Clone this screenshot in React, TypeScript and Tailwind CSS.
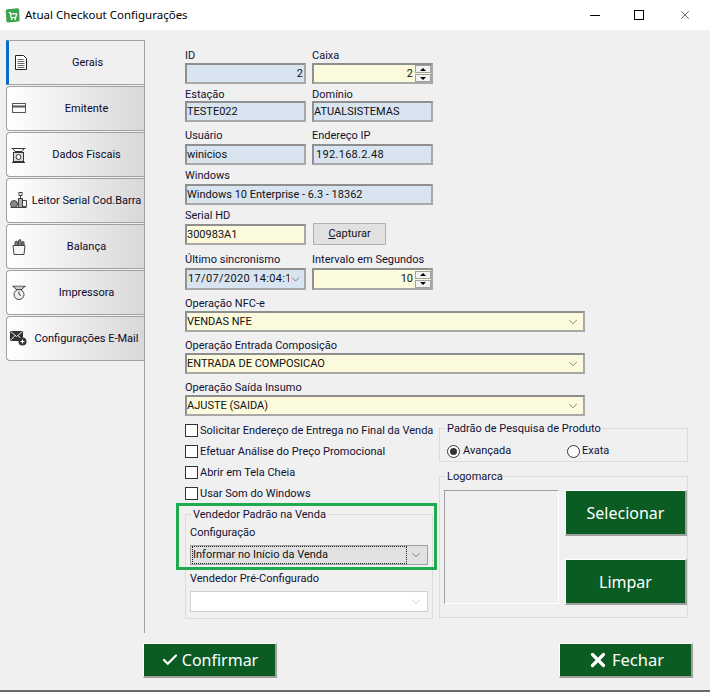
import { Check, ChevronDown, X } from 'lucide-react';
import type { ReactNode } from 'react';

function AppLogo() {
  return (
    <svg width="15" height="15" viewBox="0 0 15 15">
      <path d="M2.5 1.300 L12.500 .3 Q14 .2 14.200 1.800 L14.600 12 Q14.700 13.500 13 13.600 L3.200 14.600 Q1.600 14.700 1.400 13 L.7 3 Q.6 1.500 2.500 1.300Z" fill="#3fa34d" />
      <path d="M3.700 4.500h1.500l1 5h4.500l1-3.700H5.600" fill="none" stroke="#fff" strokeWidth="1.200" />
      <circle cx="6.700" cy="11" r=".9" fill="#fff" />
      <circle cx="10.200" cy="11" r=".9" fill="#fff" />
    </svg>
  );
}

function IconDoc() {
  return (
    <svg width="14" height="17" viewBox="0 0 14 17" fill="none" stroke="#222" strokeWidth="1">
      <path d="M1.500 1.500h8l3 3v11h-11z" fill="#fff" />
      <path d="M3.500 5.500h6M3.500 7.500h7M3.500 9.500h7M3.500 11.500h7M3.500 13.500h7" stroke="#666" />
    </svg>
  );
}

function IconCard() {
  return (
    <svg width="14" height="11" viewBox="0 0 14 11" fill="none" stroke="#555" strokeWidth="1">
      <rect x=".5" y=".5" width="13" height="9" />
      <path d="M.5 3.500h13" strokeWidth="2" />
    </svg>
  );
}

function IconScale() {
  return (
    <svg width="15" height="16" viewBox="0 0 15 16" fill="none" stroke="#333" strokeWidth="1">
      <path d="M.5 1.500h14M2 1.500l2 3h7l2-3" />
      <rect x="2.500" y="5.500" width="10" height="9" fill="#ddd" />
      <circle cx="7.500" cy="10" r="2.500" fill="#fff" />
      <path d="M1 15.500h13" strokeWidth="1.400" />
    </svg>
  );
}

function IconReader() {
  return (
    <svg width="17" height="17" viewBox="0 0 17 17" fill="none" stroke="#444" strokeWidth="1">
      <rect x="9" y=".5" width="3" height="3" />
      <path d="M10.500 3.500v3" />
      <circle cx="4" cy="12" r="3.500" fill="#888" />
      <rect x="8.500" y="6.500" width="4" height="9" fill="#aaa" />
      <path d="M13 8.500h3.500v6H13" />
      <path d="M.5 15.500h16" />
    </svg>
  );
}

function IconBag() {
  return (
    <svg width="14" height="16" viewBox="0 0 14 16" fill="none" stroke="#444" strokeWidth="1">
      <path d="M1 6.500h12l-1 9H2z" fill="#f5f5f5" />
      <path d="M3 6V3l2-1 1 4M6.500 6V1.500l2-1 1 5.500M10 6V2.500l2 .5v3" fill="#888" />
    </svg>
  );
}

function IconRoundScale() {
  return (
    <svg width="14" height="15" viewBox="0 0 14 15" fill="none" stroke="#444" strokeWidth="1">
      <path d="M.5 1.500h13" strokeWidth="1.500" />
      <path d="M2 1.500l2 3h6l2-3" fill="#ccc" />
      <circle cx="7" cy="9.500" r="5" fill="#eee" />
      <path d="M7 6.500v3l2 1" />
    </svg>
  );
}

function IconMail() {
  return (
    <svg width="17" height="15" viewBox="0 0 17 15">
      <rect x="0" y="0" width="13" height="10" fill="#333" />
      <path d="M.5 .5 6.500 5.500 12.500 .5M.5 9.500l4.500-5M12.500 9.500 8 4.500" fill="none" stroke="#eee" strokeWidth="1" />
      <circle cx="12.500" cy="10.500" r="4" fill="#333" />
      <path d="M10.500 10.500h4M12.500 8.500v4" stroke="#fff" strokeWidth="1.200" />
    </svg>
  );
}

const tabs: { label: string; icon: ReactNode }[] = [
  { label: 'Emitente', icon: <IconCard /> },
  { label: 'Dados Fiscais', icon: <IconScale /> },
  { label: 'Leitor Serial Cod.Barra', icon: <IconReader /> },
  { label: 'Balança', icon: <IconBag /> },
  { label: 'Impressora', icon: <IconRoundScale /> },
  { label: 'Configurações E-Mail', icon: <IconMail /> },
];

function Tab({ label, icon }: { label: string; icon: ReactNode }) {
  return (
    <div className="flex h-[45px] items-center rounded-l border border-r-0 border-[#a0a0a0] bg-gradient-to-r from-white to-[#d8d8d8]">
      <span className="flex w-[22px] shrink-0 justify-center pl-[1px]">{icon}</span>
      <span className="flex-1 whitespace-nowrap pt-[2px] text-center text-[#0a0a2a]">{label}</span>
    </div>
  );
}

const inputBorder = 'border-2 border-t-[#8f8f8f] border-l-[#8f8f8f] border-r-[#a8a8a8] border-b-[#a8a8a8]';

function Label({ children, h }: { children: ReactNode; h: string }) {
  return <div className={`${h} whitespace-nowrap pt-[1px] leading-[14px] text-[#111133]`}>{children}</div>;
}

function Box({ children, className }: { children?: ReactNode; className: string }) {
  return <div className={`flex items-center whitespace-nowrap pt-[1px] text-[#111] ${inputBorder} ${className}`}>{children}</div>;
}

function Spinner() {
  return (
    <div className="ml-[2px] -mt-[1px] flex h-[17px] w-[16px] shrink-0 flex-col gap-[1px]">
      <div className="flex h-[8px] items-center justify-center border border-[#a0a0a0] bg-[#f2f2f2]">
        <div className="h-0 w-0 border-x-[3px] border-b-[3px] border-x-transparent border-b-black" />
      </div>
      <div className="flex h-[8px] items-center justify-center border border-[#a0a0a0] bg-[#f2f2f2]">
        <div className="h-0 w-0 border-x-[3px] border-t-[3px] border-x-transparent border-t-black" />
      </div>
    </div>
  );
}

function Select({ value, className }: { value: string; className: string }) {
  return (
    <Box className={`justify-between pr-[3px] ${className}`}>
      <span>{value}</span>
      <ChevronDown size={14} strokeWidth={1} className="text-[#333]" />
    </Box>
  );
}

function CheckRow({ label }: { label: string }) {
  return (
    <div className="flex h-[21px] items-center gap-[2px] text-[#111133]">
      <div className="h-[13px] w-[13px] shrink-0 border border-[#333] bg-white" />
      <span className="whitespace-nowrap pt-[2px]">{label}</span>
    </div>
  );
}

function Group({ title, className, children }: { title: string; className: string; children: ReactNode }) {
  return (
    <div className={`relative border border-[#dcdcdc] ${className}`}>
      <span className="absolute left-[6px] top-[-7px] bg-[#f0f0f0] px-[1px] leading-[14px] text-[#111133]">{title}</span>
      {children}
    </div>
  );
}

function GreenButton({ children, className }: { children: ReactNode; className: string }) {
  return (
    <div className={`flex items-center justify-center gap-[3px] border border-b-2 border-r-2 border-t-white border-l-white border-b-[#a0a0a0] border-r-[#a0a0a0] bg-[#0a5c22] font-["Noto_Sans",sans-serif] text-white ${className}`}>
      {children}
    </div>
  );
}

export default function App() {
  return (
    <div className='flex h-[692px] w-[710px] flex-col overflow-hidden bg-[#f0f0f0] font-["Roboto",sans-serif] text-[11px]'>
      {/* title bar */}
      <div className="flex h-[30px] shrink-0 items-center bg-white pl-[5px]">
        <AppLogo />
        <span className='ml-[5px] font-["Noto_Sans",sans-serif] text-[11.5px] text-black'>Atual Checkout Configurações</span>
        <div className="ml-auto flex items-center gap-[34px] pr-[18px]">
          <div className="h-[1px] w-[10px] bg-black" />
          <div className="h-[10px] w-[10px] border border-black" />
          <X size={14} strokeWidth={1} className="text-black" />
        </div>
      </div>

      <div className="flex h-[603px] shrink-0">
        {/* tabs */}
        <div className="mt-[10px] flex h-[593px] w-[145px] shrink-0 flex-col gap-[1px] border-r border-[#a0a0a0] pl-[6px]">
          <div className="flex h-[45px] items-center border-y border-[#a0a0a0] border-l-[3px] border-l-[#0a6cc4] bg-[#f0f0f0]">
            <span className="flex w-[22px] shrink-0 justify-center pl-[1px]"><IconDoc /></span>
            <span className="flex-1 pt-[2px] text-center text-[#0a0a2a]">Gerais</span>
          </div>
          {tabs.map((t) => (
            <Tab key={t.label} label={t.label} icon={t.icon} />
          ))}
        </div>

        {/* form */}
        <div className="flex w-[505px] flex-col pl-[40px] pt-[18px]">
          <div className="grid w-[248px] grid-cols-2 gap-x-[6px]">
            <div>
              <Label h="h-[15px]">ID</Label>
              <Box className="h-[21px] justify-end bg-[#d8e4f0] pr-[1px]">2</Box>
            </div>
            <div>
              <Label h="h-[15px]">Caixa</Label>
              <Box className="h-[21px] justify-end bg-[#fbfadc]">2<Spinner /></Box>
            </div>
          </div>
          <div className="mt-[3px] grid w-[248px] grid-cols-2 gap-x-[6px]">
            <div>
              <Label h="h-[14px]">Estação</Label>
              <Box className="h-[21px] bg-[#d8e4f0]">TESTE022</Box>
            </div>
            <div>
              <Label h="h-[14px]">Domínio</Label>
              <Box className="h-[21px] bg-[#d8e4f0]">ATUALSISTEMAS</Box>
            </div>
          </div>
          <div className="mt-[6px] grid w-[248px] grid-cols-2 gap-x-[6px]">
            <div>
              <Label h="h-[16px]">Usuário</Label>
              <Box className="h-[21px] bg-[#d8e4f0]">winicios</Box>
            </div>
            <div>
              <Label h="h-[16px]">Endereço IP</Label>
              <Box className="h-[21px] bg-[#d8e4f0] pl-[2px] tracking-[0.3px]">192.168.2.48</Box>
            </div>
          </div>
          <div className="mt-[3px] w-[248px]">
            <Label h="h-[16px]">Windows</Label>
            <Box className="h-[21px] bg-[#d8e4f0]">Windows 10 Enterprise - 6.3 - 18362</Box>
          </div>
          <div className="mt-[3px] w-[248px]">
            <Label h="h-[16px]">Serial HD</Label>
            <div className="flex h-[21px] gap-[7px]">
              <Box className="h-[21px] w-[121px] bg-[#fbfadc]">300983A1</Box>
              <div className="-mt-[1px] flex h-[22px] w-[73px] items-center justify-center border border-[#b0b0b0] bg-[#e1e1e1] text-[#111]">
                <span><u>C</u>apturar</span>
              </div>
            </div>
          </div>
          <div className="mt-[7px] grid w-[248px] grid-cols-2 gap-x-[6px]">
            <div>
              <Label h="h-[16px]">Último sincronismo</Label>
              <Box className="h-[22px] justify-between overflow-hidden bg-[#d8e4f0] pl-[1px] pr-[2px]">
                <span className="w-[101px] overflow-hidden tracking-[0.35px]">17/07/2020 14:04:10</span>
                <ChevronDown size={13} strokeWidth={1} className="shrink-0 text-[#333]" />
              </Box>
            </div>
            <div>
              <Label h="h-[16px]">Intervalo em Segundos</Label>
              <Box className="h-[22px] justify-end bg-[#fbfadc]">10<Spinner /></Box>
            </div>
          </div>
          <div className="mt-[6px] w-[400px]">
            <Label h="h-[15px]">Operação NFC-e</Label>
            <Select value="VENDAS NFE" className="h-[21px] bg-[#fbfadc]" />
          </div>
          <div className="mt-[6px] w-[400px]">
            <Label h="h-[15px]">Operação Entrada Composição</Label>
            <Select value="ENTRADA DE COMPOSICAO" className="h-[21px] bg-[#fbfadc]" />
          </div>
          <div className="mt-[6px] w-[400px]">
            <Label h="h-[15px]">Operação Saída Insumo</Label>
            <Select value="AJUSTE (SAIDA)" className="h-[21px] bg-[#fbfadc]" />
          </div>

          {/* lower columns */}
          <div className="flex gap-[6px]">
            <div className="relative w-[248px] pt-[4px]">
              <CheckRow label="Solicitar Endereço de Entrega no Final da Venda" />
              <CheckRow label="Efetuar Análise do Preço Promocional" />
              <CheckRow label="Abrir em Tela Cheia" />
              <CheckRow label="Usar Som do Windows" />
              <Group title="Vendedor Padrão na Venda" className="mt-[10px] h-[105px] px-[4px] pt-[10px]">
                <Label h="h-[20px]">Configuração</Label>
                <div className="flex h-[20px] items-center justify-between border border-[#a0a0a0] bg-[#e1e1e1] pl-[2px] pr-[4px] text-[#111]">
                  <span className="flex h-[16px] flex-1 items-center pt-[1px] outline outline-1 outline-dotted outline-[#222]">Informar no Início da Venda</span>
                  <ChevronDown size={14} strokeWidth={1} className="ml-[3px] text-[#333]" />
                </div>
                <div className="mt-[6px]">
                  <Label h="h-[20px]">Vendedor Pré-Configurado</Label>
                  <div className="flex h-[21px] items-center justify-end border border-[#d0d0d0] bg-white pr-[4px]">
                    <ChevronDown size={14} strokeWidth={1} className="text-[#aaa]" />
                  </div>
                </div>
              </Group>
              {/* destaque verde por cima do grupo */}
              <div className="absolute left-[-9px] top-[87px] h-[67px] w-[261px] border-[3px] border-[#1faa4f]" />
            </div>

            <div className="w-[251px] pt-[12px]">
              <Group title="Padrão de Pesquisa de Produto" className="h-[34px]">
                <div className="flex h-full items-center pl-[7px] pt-[12px] text-[#111133]">
                  <div className="flex w-[120px] items-center gap-[3px]">
                    <div className="flex h-[13px] w-[13px] items-center justify-center rounded-full border border-[#333] bg-white">
                      <div className="h-[7px] w-[7px] rounded-full bg-[#333]" />
                    </div>
                    <span className="pt-[1px]">Avançada</span>
                  </div>
                  <div className="flex items-center gap-[2px]">
                    <div className="h-[13px] w-[13px] rounded-full border border-[#333] bg-white" />
                    <span className="pt-[1px]">Exata</span>
                  </div>
                </div>
              </Group>
              <Group title="Logomarca" className="mt-[14px] h-[142px]">
                <div className="flex gap-[6px] pl-[4px] pt-[13px]">
                  <div className="h-[114px] w-[115px] border border-b-white border-r-white border-t-[#a0a0a0] border-l-[#a0a0a0]" />
                  <div className="flex w-[122px] flex-col gap-[23px]">
                    <GreenButton className="h-[46px] text-[16px]">Selecionar</GreenButton>
                    <GreenButton className="h-[46px] text-[16px]">Limpar</GreenButton>
                  </div>
                </div>
              </Group>
            </div>
          </div>
        </div>
      </div>

      {/* footer */}
      <div className="flex h-[57px] shrink-0 items-start justify-between pl-[143px] pr-[17px] pt-[10px]">
        <GreenButton className="h-[35px] w-[134px] text-[16px]"><Check size={18} strokeWidth={3} />Confirmar</GreenButton>
        <GreenButton className="h-[35px] w-[134px] text-[16.5px]"><X size={22} strokeWidth={3.500} />Fechar</GreenButton>
      </div>
      <div className="h-[2px] shrink-0 bg-[#6a6a6a]" />
    </div>
  );
}
